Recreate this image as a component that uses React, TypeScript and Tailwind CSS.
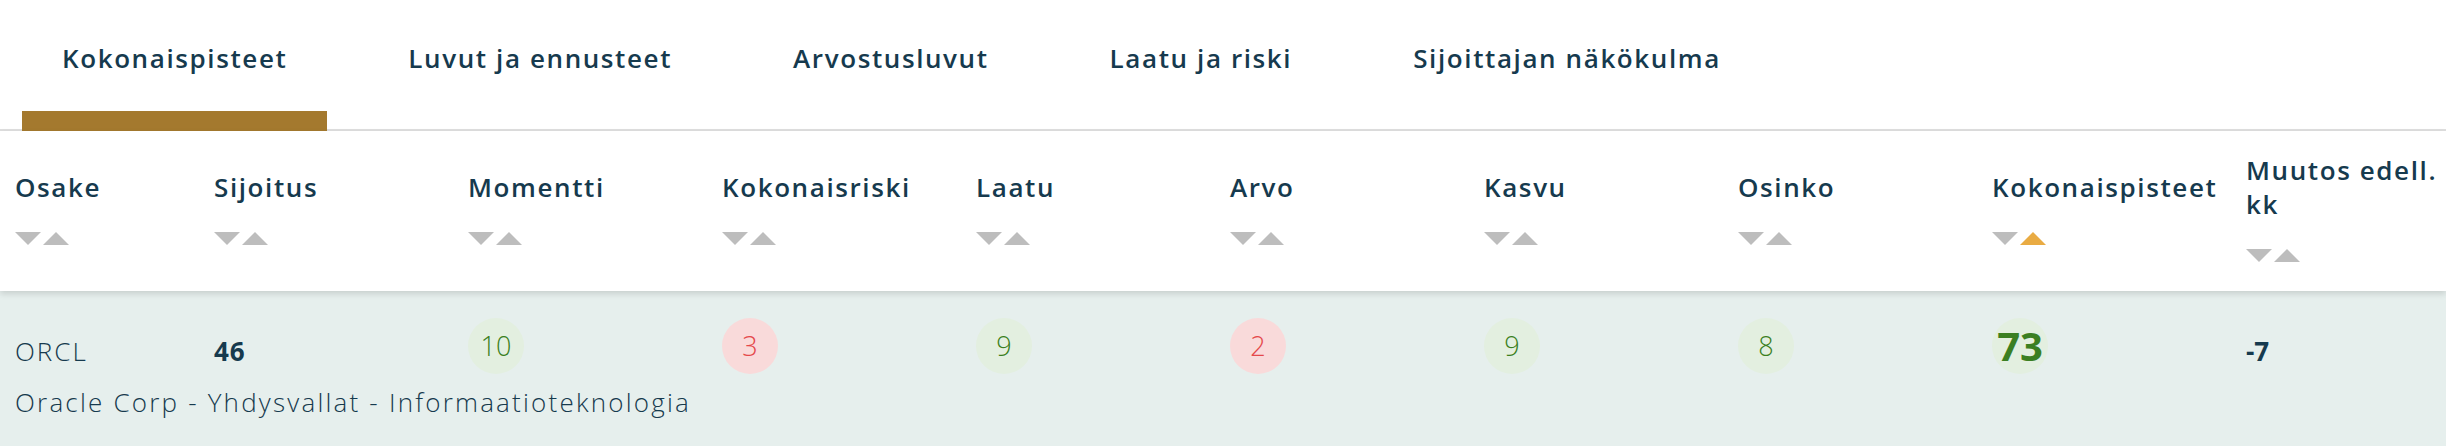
import React from "react";

const font = { fontFamily: '"Open Sans", "DejaVu Sans", sans-serif' };

const tabs = ["Kokonaispisteet", "Luvut ja ennusteet", "Arvostusluvut", "Laatu ja riski", "Sijoittajan näkökulma"];

interface Column {
  label: string;
  active?: boolean;
}

const columns: Column[] = [
  { label: "Osake" },
  { label: "Sijoitus" },
  { label: "Momentti" },
  { label: "Kokonaisriski" },
  { label: "Laatu" },
  { label: "Arvo" },
  { label: "Kasvu" },
  { label: "Osinko" },
  { label: "Kokonaispisteet", active: true },
  { label: "Muutos edell. kk" },
];

type Tone = "good" | "bad";
const scores: { value: number; tone: Tone }[] = [
  { value: 10, tone: "good" },
  { value: 3, tone: "bad" },
  { value: 9, tone: "good" },
  { value: 2, tone: "bad" },
  { value: 9, tone: "good" },
  { value: 8, tone: "good" },
];

function SortArrows({ active }: { active?: boolean }) {
  return (
    <svg width="54" height="13" viewBox="0 0 54 13" className="mt-[28px] block">
      <polygon points="0,0 26,0 13,13" fill="#bdbdbd" />
      <polygon points="28,13 54,13 41,0" fill={active ? "#e9ab43" : "#bdbdbd"} />
    </svg>
  );
}

function Bubble({ value, tone }: { value: number; tone: Tone }) {
  return (
    <div
      className={
        tone === "good"
          ? "flex h-[56px] w-[56px] items-center justify-center rounded-full bg-[#e3efe0] text-[27px] font-light text-[#3b7f22]"
          : "flex h-[56px] w-[56px] items-center justify-center rounded-full bg-[#f9dada] text-[27px] font-light text-[#e5484b]"
      }
    >
      {value}
    </div>
  );
}

export default function App() {
  return (
    <div className="w-[2446px] h-[446px] overflow-hidden bg-white text-[#163a4e]" style={font}>
      {/* tabs */}
      <div className="flex h-[131px] items-stretch gap-[41px] border-b-2 border-[#dedede] pl-[22px]">
        {tabs.map((t, i) => (
          <div
            key={t}
            className={
              i === 0
                ? "-mb-[2px] flex flex-col justify-between border-b-[20px] border-[#a4792e] px-[40px] pt-[40px]"
                : "flex flex-col px-[40px] pt-[40px]"
            }
          >
            <span className="text-[26px] font-semibold leading-[36px] tracking-[1.6px] whitespace-nowrap">{t}</span>
          </div>
        ))}
      </div>

      {/* header */}
      <div className="relative z-10 grid h-[160px] grid-cols-[199px_repeat(8,254px)_1fr] items-center bg-white pb-[8px] shadow-[0_3px_6px_rgba(0,0,0,0.13)]">
        {columns.map((c) => (
          <div key={c.label} className="flex flex-col pl-[15px] pr-[6px]">
            <span className="text-[26px] font-semibold leading-[34px] tracking-[1.6px]">{c.label}</span>
            <SortArrows active={c.active} />
          </div>
        ))}
      </div>

      {/* row */}
      <div className="grid grid-cols-[199px_repeat(8,254px)_1fr] bg-[#e6efed] pt-[27px] pb-[30px]">
        <div className="pl-[15px] text-[26px] font-light leading-[66px] tracking-[2px]">ORCL</div>
        <div className="pl-[15px] text-[26px] font-bold leading-[66px] tracking-[1px]">46</div>
        {scores.map((s, i) => (
          <div key={i} className="pl-[15px]">
            <Bubble value={s.value} tone={s.tone} />
          </div>
        ))}
        <div className="pl-[15px]">
          <div className="flex h-[56px] w-[56px] items-center justify-center rounded-full bg-[#e3efe0] text-[40px] font-bold text-[#3b7f22]">
            73
          </div>
        </div>
        <div className="pl-[15px] text-[26px] font-bold leading-[66px]">-7</div>
        <div className="col-span-10 mt-[1px] pl-[15px] text-[26px] font-light leading-[34px] tracking-[2.2px]">
          Oracle Corp - Yhdysvallat - Informaatioteknologia
        </div>
      </div>
    </div>
  );
}
